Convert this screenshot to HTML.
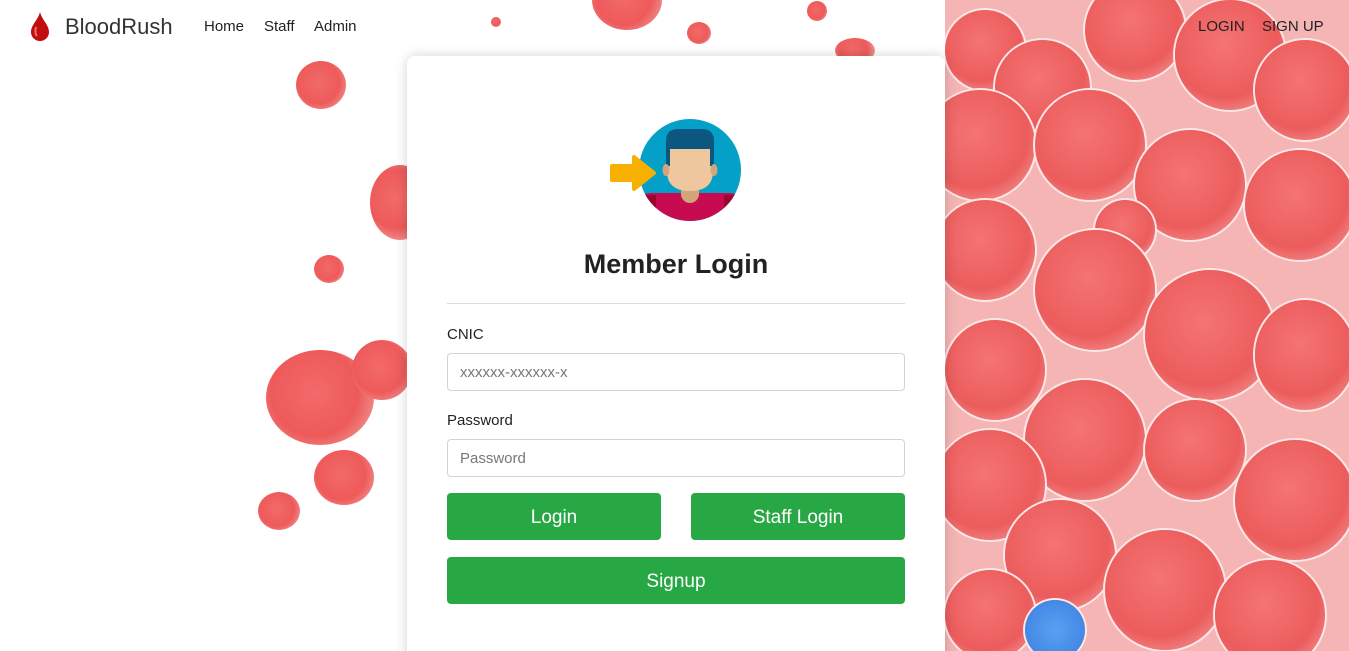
<!DOCTYPE html>
<html style="overflow:hidden;height:651px"><head><style>
body{margin:0;width:1349px;height:651px;overflow:hidden;position:relative;background:#fff;font-family:"Liberation Sans",sans-serif}
.c{position:absolute;border-radius:50%;background:radial-gradient(circle at 45% 45%,#f26a6a 0%,#ee5a5a 55%,#f08a8a 80%,#fbd4d4 100%)}
.right{position:absolute;left:945px;top:0;width:404px;height:651px;background:#f5b5b5;overflow:hidden}
.right .c{box-shadow:0 0 0 2px #fde8e8;background:radial-gradient(circle at 45% 40%,#f47474 0%,#ec5c5c 60%,#f29090 85%,#fde0e0 100%)}
nav a{position:absolute;top:17px;font-size:15px;color:#222;text-decoration:none}
.card{position:absolute;left:407px;top:56px;width:538px;height:620px;background:#fff;border-radius:8px;box-shadow:0 0 12px rgba(0,0,0,.18)}
.lbl{position:absolute;left:40px;font-size:15px;color:#222}
.inp{position:absolute;left:40px;width:458px;height:38px;border:1px solid #ced4da;border-radius:4px;box-sizing:border-box;font-size:15px;color:#777;padding:10px 12px}
.btn{position:absolute;height:47px;background:#28a745;color:#fff;border-radius:4px;font-size:19px;text-align:center;line-height:49px}
</style></head><body>
<div class="c" style="left:296px;top:61px;width:50px;height:48px"></div>
<div class="c" style="left:370px;top:165px;width:60px;height:75px"></div>
<div class="c" style="left:314px;top:255px;width:30px;height:28px"></div>
<div class="c" style="left:266px;top:350px;width:108px;height:95px"></div>
<div class="c" style="left:352px;top:340px;width:60px;height:60px"></div>
<div class="c" style="left:314px;top:450px;width:60px;height:55px"></div>
<div class="c" style="left:258px;top:492px;width:42px;height:38px"></div>
<div class="c" style="left:491px;top:17px;width:10px;height:10px"></div>
<div class="c" style="left:687px;top:22px;width:24px;height:22px"></div>
<div class="c" style="left:807px;top:1px;width:20px;height:20px"></div>
<div class="c" style="left:835px;top:38px;width:40px;height:25px"></div>
<div class="c" style="left:592px;top:-30px;width:70px;height:60px"></div>
<div class="right">
<div class="c" style="left:0px;top:10px;width:80px;height:80px"></div>
<div class="c" style="left:50px;top:40px;width:95px;height:95px"></div>
<div class="c" style="left:140px;top:-20px;width:100px;height:100px"></div>
<div class="c" style="left:230px;top:0px;width:110px;height:110px"></div>
<div class="c" style="left:310px;top:40px;width:100px;height:100px"></div>
<div class="c" style="left:-20px;top:90px;width:110px;height:110px"></div>
<div class="c" style="left:90px;top:90px;width:110px;height:110px"></div>
<div class="c" style="left:190px;top:130px;width:110px;height:110px"></div>
<div class="c" style="left:300px;top:150px;width:110px;height:110px"></div>
<div class="c" style="left:150px;top:200px;width:60px;height:60px"></div>
<div class="c" style="left:-10px;top:200px;width:100px;height:100px"></div>
<div class="c" style="left:90px;top:230px;width:120px;height:120px"></div>
<div class="c" style="left:200px;top:270px;width:130px;height:130px"></div>
<div class="c" style="left:310px;top:300px;width:100px;height:110px"></div>
<div class="c" style="left:0px;top:320px;width:100px;height:100px"></div>
<div class="c" style="left:80px;top:380px;width:120px;height:120px"></div>
<div class="c" style="left:200px;top:400px;width:100px;height:100px"></div>
<div class="c" style="left:290px;top:440px;width:120px;height:120px"></div>
<div class="c" style="left:-10px;top:430px;width:110px;height:110px"></div>
<div class="c" style="left:60px;top:500px;width:110px;height:110px"></div>
<div class="c" style="left:160px;top:530px;width:120px;height:120px"></div>
<div class="c" style="left:270px;top:560px;width:110px;height:110px"></div>
<div class="c" style="left:0px;top:570px;width:90px;height:90px"></div>
<div class="c" style="left:80px;top:600px;width:60px;height:60px;background:radial-gradient(circle,#5aa0f0,#3a7fe0)"></div>
</div>
<nav>
<svg style="position:absolute;left:30px;top:11px" width="20" height="30" viewBox="0 0 20 30"><path d="M10 1 C8 9 1 14 1 21 A9 9 0 0 0 19 21 C19 14 12 9 10 1Z" fill="#c10d0d"/><path d="M6 16 C5 20 5 23 7 25" stroke="#f07070" stroke-width="2" fill="none"/></svg>
<a style="left:65px;top:14px;font-size:22px;color:#333">BloodRush</a>
<a style="left:204px;top:18px">Home</a><a style="left:264px;top:18px">Staff</a><a style="left:314px;top:18px">Admin</a>
<a style="left:1198px;top:18px">LOGIN</a><a style="left:1262px;top:18px">SIGN UP</a>
</nav>
<div class="card">
<svg style="position:absolute;left:203px;top:63px" width="135" height="104" viewBox="0 0 135 104">
<circle cx="80" cy="51" r="51" fill="#05a0c8"/>
<clipPath id="k"><circle cx="80" cy="51" r="51"/></clipPath>
<g clip-path="url(#k)"><path d="M30 80 Q30 74 42 74 L118 74 Q130 74 130 80 L130 110 L30 110Z" fill="#c70b50"/><rect x="30" y="76" width="16" height="34" fill="#9a0630"/><rect x="114" y="76" width="16" height="34" fill="#9a0630"/></g>
<rect x="71" y="60" width="18" height="24" rx="9" fill="#d3a57c"/>
<path d="M57 30 L103 30 L103 52 Q103 72 80 72 Q57 72 57 52Z" fill="#efc79e"/>
<path d="M56 47 L56 22 Q56 10 68 10 L92 10 Q104 10 104 22 L104 47 L100 47 L100 30 L60 30 L60 47Z" fill="#0c5780"/>
<ellipse cx="56" cy="51" rx="3.5" ry="6" fill="#d3a57c"/><ellipse cx="104" cy="51" rx="3.5" ry="6" fill="#d3a57c"/>
<path d="M2 47 H24 V38 L44 54 L24 70 V61 H2Z" fill="#f8b000" stroke="#f8b000" stroke-linejoin="round" stroke-width="4"/>
</svg>
<div style="position:absolute;left:0;width:538px;top:193px;text-align:center;font-size:27px;font-weight:bold;color:#222">Member Login</div>
<div style="position:absolute;left:40px;width:458px;top:247px;border-top:1px solid #ddd"></div>
<div class="lbl" style="top:270px">CNIC</div>
<div class="inp" style="top:297px">xxxxxx-xxxxxx-x</div>
<div class="lbl" style="top:356px">Password</div>
<div class="inp" style="top:383px">Password</div>
<div class="btn" style="left:40px;top:437px;width:214px">Login</div>
<div class="btn" style="left:284px;top:437px;width:214px">Staff Login</div>
<div class="btn" style="left:40px;top:501px;width:458px">Signup</div>
</div>
</body></html>
